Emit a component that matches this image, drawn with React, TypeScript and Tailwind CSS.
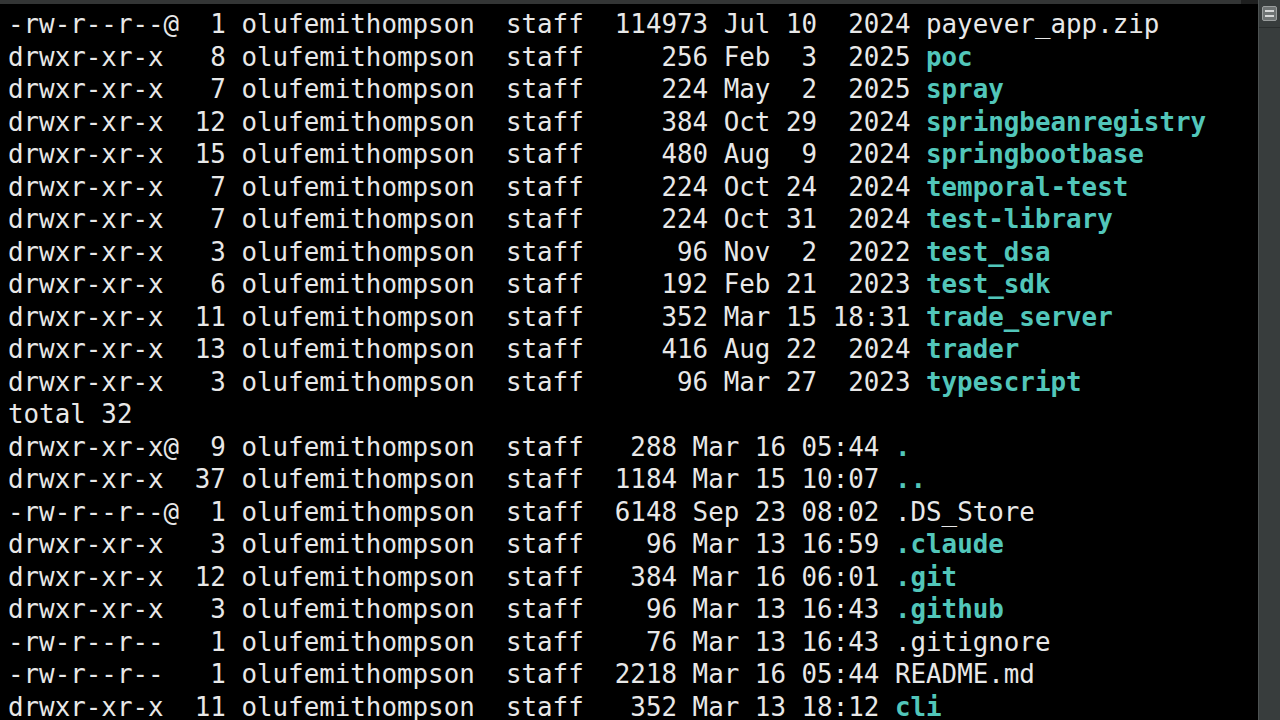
import React from 'react';

type Row = { meta: string; name?: string; dir?: boolean };

const rows: Row[] = [
  { meta: '-rw-r--r--@  1 olufemithompson  staff  114973 Jul 10  2024 ', name: 'payever_app.zip' },
  { meta: 'drwxr-xr-x   8 olufemithompson  staff     256 Feb  3  2025 ', name: 'poc', dir: true },
  { meta: 'drwxr-xr-x   7 olufemithompson  staff     224 May  2  2025 ', name: 'spray', dir: true },
  { meta: 'drwxr-xr-x  12 olufemithompson  staff     384 Oct 29  2024 ', name: 'springbeanregistry', dir: true },
  { meta: 'drwxr-xr-x  15 olufemithompson  staff     480 Aug  9  2024 ', name: 'springbootbase', dir: true },
  { meta: 'drwxr-xr-x   7 olufemithompson  staff     224 Oct 24  2024 ', name: 'temporal-test', dir: true },
  { meta: 'drwxr-xr-x   7 olufemithompson  staff     224 Oct 31  2024 ', name: 'test-library', dir: true },
  { meta: 'drwxr-xr-x   3 olufemithompson  staff      96 Nov  2  2022 ', name: 'test_dsa', dir: true },
  { meta: 'drwxr-xr-x   6 olufemithompson  staff     192 Feb 21  2023 ', name: 'test_sdk', dir: true },
  { meta: 'drwxr-xr-x  11 olufemithompson  staff     352 Mar 15 18:31 ', name: 'trade_server', dir: true },
  { meta: 'drwxr-xr-x  13 olufemithompson  staff     416 Aug 22  2024 ', name: 'trader', dir: true },
  { meta: 'drwxr-xr-x   3 olufemithompson  staff      96 Mar 27  2023 ', name: 'typescript', dir: true },
  { meta: 'total 32' },
  { meta: 'drwxr-xr-x@  9 olufemithompson  staff   288 Mar 16 05:44 ', name: '.', dir: true },
  { meta: 'drwxr-xr-x  37 olufemithompson  staff  1184 Mar 15 10:07 ', name: '..', dir: true },
  { meta: '-rw-r--r--@  1 olufemithompson  staff  6148 Sep 23 08:02 ', name: '.DS_Store' },
  { meta: 'drwxr-xr-x   3 olufemithompson  staff    96 Mar 13 16:59 ', name: '.claude', dir: true },
  { meta: 'drwxr-xr-x  12 olufemithompson  staff   384 Mar 16 06:01 ', name: '.git', dir: true },
  { meta: 'drwxr-xr-x   3 olufemithompson  staff    96 Mar 13 16:43 ', name: '.github', dir: true },
  { meta: '-rw-r--r--   1 olufemithompson  staff    76 Mar 13 16:43 ', name: '.gitignore' },
  { meta: '-rw-r--r--   1 olufemithompson  staff  2218 Mar 16 05:44 ', name: 'README.md' },
  { meta: 'drwxr-xr-x  11 olufemithompson  staff   352 Mar 13 18:12 ', name: 'cli', dir: true },
];

const App = () => {
  return (
    <div className="grid h-[720px] w-[1280px] grid-cols-[1258px_22px] overflow-hidden bg-black">
      <div className="flex min-w-0 flex-col overflow-hidden">
        <div className="flex h-[4px] shrink-0">
          <div className="flex-1 bg-[#333535]" />
          <div className="w-[17px] bg-[#1e1f1f]" />
        </div>
        <div className="flex-1 overflow-hidden pl-[8px] pt-[4px] font-['DejaVu_Sans_Mono',monospace] text-[25.85px] leading-[32.5px] text-[#e8e8e8]">
          {rows.map((r, i) => (
            <div key={i} className="whitespace-pre">
              {r.meta}
              {r.name && (
                <span className={r.dir ? 'font-bold text-[#52c6ba]' : ''}>{r.name}</span>
              )}
            </div>
          ))}
        </div>
      </div>
      <div className="flex h-full flex-col border-l border-[#4d5252] bg-[#383d3d]">
        <div className="flex h-[28px] items-center justify-center border-b border-[#2a2e2e]">
          <div className="flex h-[15px] w-[15px] flex-col justify-center gap-[3px] rounded-[2px] border border-[#9a9e9e] bg-[#6f7474] px-[2px]">
            <div className="h-[2px] bg-[#d6d8d8]" />
            <div className="h-[2px] bg-[#d6d8d8]" />
          </div>
        </div>
      </div>
    </div>
  );
};

export default App;
